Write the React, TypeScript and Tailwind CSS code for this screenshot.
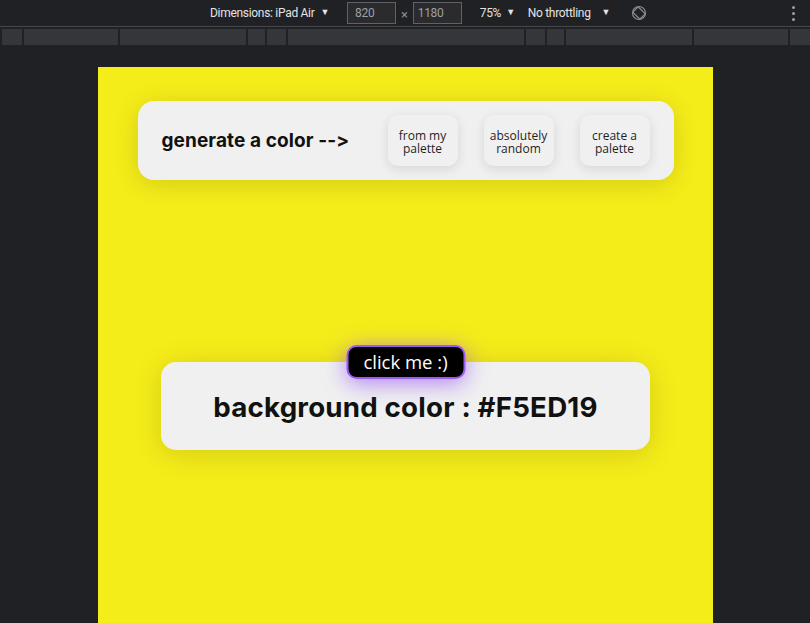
const segments = [20, 94, 126, 17, 19, 236, 19, 17, 126, 94, 20];

function RotateIcon() {
  return (
    <svg width="16" height="16" viewBox="0 0 16 16" fill="none" stroke="#8a8d91" strokeWidth="1.2">
      <circle cx="8" cy="8" r="6.5" />
      <rect x="4.2" y="3" width="7.6" height="10" rx="1" transform="rotate(-45 8 8)" />
    </svg>
  );
}

function DevToolbar() {
  return (
    <div className="h-[27px] border-b border-[#45474b] bg-[#202124] flex items-center text-[12px] tracking-[-0.3px] text-[#e3e3e3] relative font-['Roboto',sans-serif]">
      <div className="ml-[210px] flex items-center gap-[6px]">
        <span>Dimensions: iPad Air</span>
        <span className="text-[9px]">▼</span>
      </div>
      <div className="ml-[18px] w-[49px] h-[22px] border border-[#5f6368] bg-[#2b2b2e] text-[#9aa0a6] flex items-center pl-[7px]">
        820
      </div>
      <span className="mx-[5px] text-[#7d8fa3] text-[13px] mt-[3px]">×</span>
      <div className="w-[49px] h-[22px] border border-[#5f6368] bg-[#2b2b2e] text-[#9aa0a6] flex items-center pl-[4px]">
        1180
      </div>
      <div className="ml-[18px] flex items-center gap-[5px]">
        <span>75%</span>
        <span className="text-[9px]">▼</span>
      </div>
      <div className="ml-[13px] flex items-center gap-[11px]">
        <span>No throttling</span>
        <span className="text-[9px]">▼</span>
      </div>
      <div className="ml-[21px] flex items-center">
        <RotateIcon />
      </div>
      <div className="absolute right-[15px] top-[6px] flex flex-col gap-[3px]">
        <div className="w-[3px] h-[3px] rounded-full bg-[#9aa0a6]" />
        <div className="w-[3px] h-[3px] rounded-full bg-[#9aa0a6]" />
        <div className="w-[3px] h-[3px] rounded-full bg-[#9aa0a6]" />
      </div>
    </div>
  );
}

function Ruler() {
  return (
    <div className="mt-[2px] h-[16px] pl-[2px] flex gap-[2px]">
      {segments.map((w, i) => (
        <div key={i} className="h-full bg-[#35363a]" style={{ width: w }} />
      ))}
    </div>
  );
}

function PickButton({ top, bottom }: { top: string; bottom: string }) {
  return (
    <button className="w-[70px] h-[51px] pt-[3px] rounded-[10px] bg-[#f0f0f0] shadow-[0_3px_12px_rgba(0,0,0,0.11)] flex flex-col items-center justify-center text-[12px] leading-[13px] text-[#1f1f1f] font-['Open_Sans',sans-serif]">
      <span>{top}</span>
      <span>{bottom}</span>
    </button>
  );
}

export default function App() {
  return (
    <div className="w-[810px] h-[623px] overflow-hidden bg-[#202124] flex flex-col">
      <DevToolbar />
      <Ruler />
      <div className="mt-[22px] ml-[98px] w-[615px] flex-1 bg-[#f5ed19] flex flex-col items-center font-['Inter',sans-serif]">
        <div className="mt-[34px] w-[536px] h-[79px] rounded-[16px] bg-[#f0f0f0] shadow-[0_4px_26px_rgba(0,0,0,0.14)] flex items-center justify-between pl-[24px] pr-[24px]">
          <h2 className="text-[19px] font-bold text-[#111] tracking-[0.1px] mt-[1px]">generate a color --&gt;</h2>
          <div className="flex items-center gap-[26px]">
            <PickButton top="from my" bottom="palette" />
            <PickButton top="absolutely" bottom="random" />
            <PickButton top="create a" bottom="palette" />
          </div>
        </div>
        <div className="mt-[182px] relative w-[489px] h-[88px] rounded-[15px] bg-[#f0f0f0] shadow-[0_4px_30px_rgba(0,0,0,0.14)] flex items-center justify-center">
          <button className="absolute left-1/2 -translate-x-1/2 top-[-17px] w-[119px] h-[34px] rounded-[10px] bg-black border-2 border-[#9a5cf5] shadow-[0_4px_22px_rgba(155,92,245,0.75)] text-white text-[18.5px] font-['Open_Sans',sans-serif] flex items-center justify-center">
            click me :)
          </button>
          <h1 className="text-[27.7px] font-bold text-[#111] tracking-[0.2px] mt-[4px]">background color : #F5ED19</h1>
        </div>
      </div>
    </div>
  );
}
